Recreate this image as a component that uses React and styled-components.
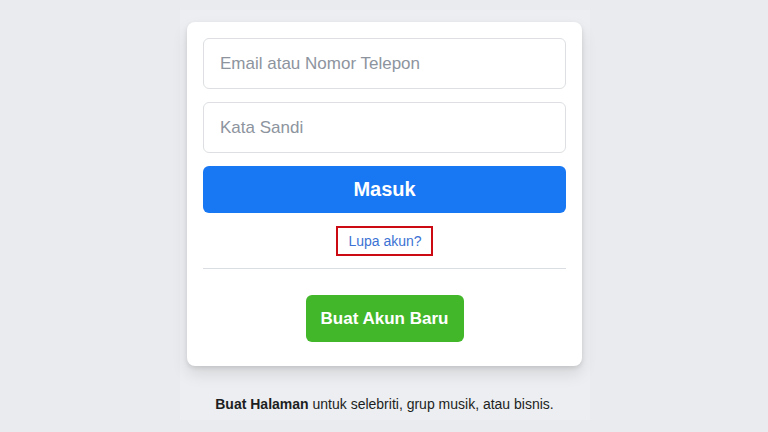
import styled, { createGlobalStyle } from 'styled-components';

const GlobalStyle = createGlobalStyle`
    body {
        margin: 0;
        background: #e9ebee;
        font-family: "Liberation Sans", Arial, sans-serif;
    }
`;

const Page = styled.main`
    width: 768px;
    height: 432px;
    overflow: hidden;
    display: flex;
    justify-content: center;
`;

const Panel = styled.div`
    width: 410px;
    height: 410px;
    margin-top: 10px;
    padding: 12px 8px 0 7px;
    box-sizing: border-box;
    background: #eceef1;
    display: flex;
    flex-direction: column;
    align-items: center;
    transform: translateX(1px);
`;

const Card = styled.form`
    width: 395px;
    box-sizing: border-box;
    background: #fff;
    border-radius: 8px;
    box-shadow: 0 2px 4px rgba(0, 0, 0, 0.1), 0 8px 16px rgba(0, 0, 0, 0.1);
    padding: 16px 16px 24px;
    display: flex;
    flex-direction: column;
    align-items: center;
`;

const Input = styled.input`
    width: 100%;
    height: 51px;
    box-sizing: border-box;
    border: 1px solid #dddfe2;
    border-radius: 6px;
    padding: 0 16px;
    margin-bottom: 13px;
    font-family: inherit;
    font-size: 17px;
    color: #1d2129;
    outline: none;

    &::placeholder {
        color: #8d949e;
    }
`;

const LoginButton = styled.button`
    width: 100%;
    height: 47px;
    border: none;
    border-radius: 6px;
    background: #1877f2;
    color: #fff;
    font-family: inherit;
    font-size: 20px;
    font-weight: bold;
`;

const Forgot = styled.a`
    margin-top: 13px;
    height: 30px;
    box-sizing: border-box;
    padding: 0 9px 0 10px;
    display: flex;
    align-items: center;
    border: 2px solid #cc0a14;
    color: #3b72d4;
    font-size: 14px;
    text-decoration: none;
`;

const Divider = styled.hr`
    width: 100%;
    border: none;
    border-top: 1px solid #dadde1;
    margin: 12px 0 26px;
`;

const CreateButton = styled.button`
    width: 158px;
    height: 47px;
    border: none;
    border-radius: 6px;
    background: #42b72a;
    color: #fff;
    font-family: inherit;
    font-size: 17px;
    font-weight: bold;
`;

const Footer = styled.p`
    margin: 30px 0 0;
    font-size: 14px;
    color: #1c1e21;

    b {
        font-weight: bold;
    }
`;

export default function App() {
    return (
        <>
            <GlobalStyle />
            <Page>
                <Panel>
                    <Card onSubmit={(e) => e.preventDefault()}>
                        <Input type="text" placeholder="Email atau Nomor Telepon" />
                        <Input type="password" placeholder="Kata Sandi" />
                        <LoginButton type="submit">Masuk</LoginButton>
                        <Forgot href="#">Lupa akun?</Forgot>
                        <Divider />
                        <CreateButton type="button">Buat Akun Baru</CreateButton>
                    </Card>
                    <Footer>
                        <b>Buat Halaman</b> untuk selebriti, grup musik, atau bisnis.
                    </Footer>
                </Panel>
            </Page>
        </>
    );
}
